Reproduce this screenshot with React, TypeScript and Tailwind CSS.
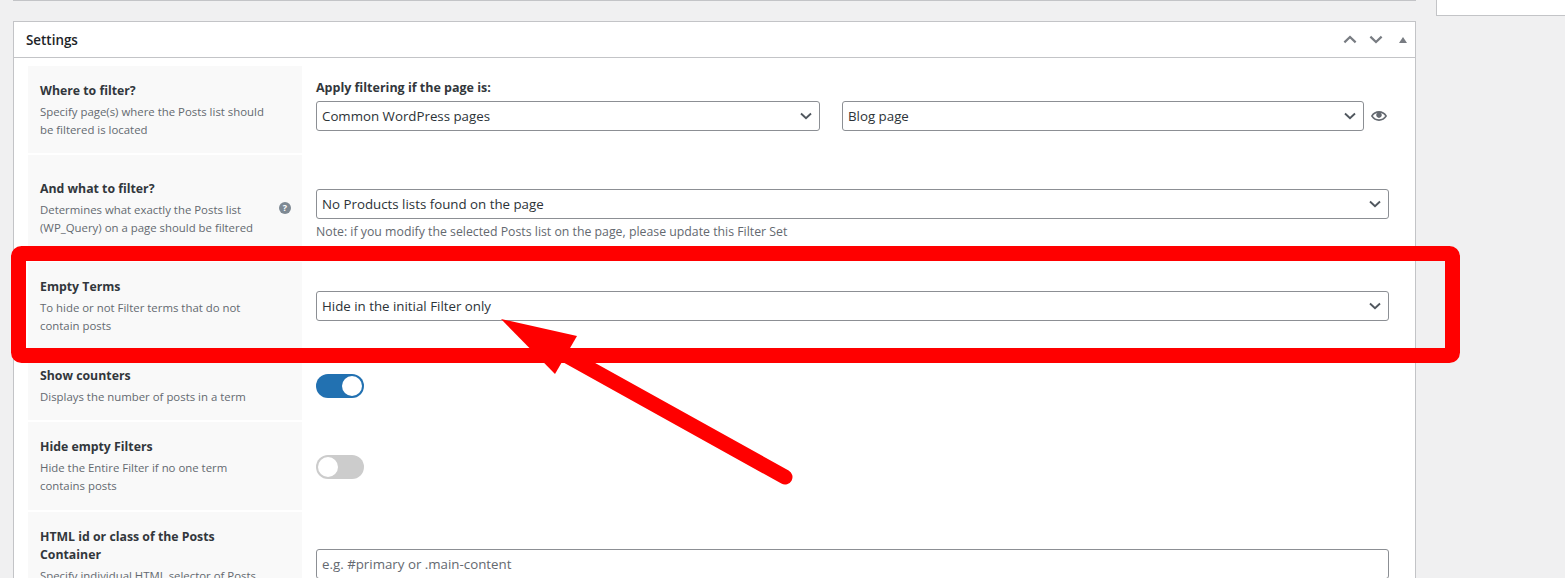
import type { ReactNode } from "react";

const font = { fontFamily: '"Open Sans", sans-serif' };

function Chevron({ className, width = "1.7" }: { className: string; width?: string }) {
  return (
    <svg viewBox="0 0 12 8" className={className} fill="none" stroke="currentColor" strokeWidth={width}>
      <path d="M1 1.5 6 6.2 11 1.5" />
    </svg>
  );
}

function Select({ value, className }: { value: string; className: string }) {
  return (
    <div className={`flex h-[30px] items-center justify-between rounded-[3px] border border-[#8c8f94] bg-white pl-[5px] pr-[7px] text-[13.3px] text-[#2c3338] ${className}`}>
      <span className="pt-[1px]">{value}</span>
      <Chevron className="h-[8px] w-[12px] text-[#50575e]" width="1.9" />
    </div>
  );
}

function Row({
  title,
  desc,
  height,
  top,
  help,
  children,
}: {
  title: string;
  desc: string;
  height: string;
  top: string;
  help?: boolean;
  children: ReactNode;
}) {
  return (
    <div className={`flex ${height}`}>
      <div className="relative flex w-[274px] shrink-0 flex-col justify-center bg-[#f9f9f9] pl-[12px] pr-[28px]">
        <div className="mt-[1px] text-[12.3px] font-bold leading-[18px] text-[#32373c]">{title}</div>
        <div className="mt-[3px] text-[11.4px] leading-[18px] text-[#646970]">{desc}</div>
        {help && (
          <div className="absolute left-[251px] top-[47px] flex h-[12px] w-[12px] items-center justify-center rounded-full bg-[#7e8993] text-[9px] font-bold text-white">
            ?
          </div>
        )}
      </div>
      <div className={`flex-1 pl-[14px] pr-[26px] ${top}`}>{children}</div>
    </div>
  );
}

function Toggle({ on }: { on: boolean }) {
  return (
    <div className={`flex h-[24px] w-[48px] items-center rounded-full px-[2px] ${on ? "justify-end bg-[#2271b1]" : "justify-start bg-[#cccccc]"}`}>
      <div className="h-[20px] w-[20px] rounded-full bg-white" />
    </div>
  );
}

export default function App() {
  return (
    <div className="relative h-[578px] overflow-hidden bg-[#f0f0f1]" style={font}>
      <div className="flex h-[21px] items-start">
        <div className="ml-[13px] h-[1px] w-[1403px] bg-[#c3c4c7]" />
        <div className="ml-[20px] h-[16px] flex-1 border-b border-l border-[#c3c4c7] bg-white" />
      </div>

      {/* Settings box */}
      <div className="ml-[13px] h-[557px] w-[1403px] border-x border-t border-[#c3c4c7] bg-white">
        <div className="flex h-[36px] items-center justify-between border-b border-[#c3c4c7] pl-[12px] pr-[8px]">
          <span className="pt-[1px] text-[13.4px] font-semibold text-[#1d2327]">Settings</span>
          <div className="flex items-center text-[#787c82]">
            <Chevron className="h-[9px] w-[14px] rotate-180" width="2" />
            <Chevron className="ml-[12px] h-[9px] w-[14px]" width="2" />
            <div className="ml-[16px] h-0 w-0 border-x-[4px] border-b-[6px] border-x-transparent border-b-[#787c82]" />
          </div>
        </div>

        <div className="flex flex-col gap-[2px] pl-[14px] pt-[8px]">
          <Row
            title="Where to filter?"
            desc="Specify page(s) where the Posts list should be filtered is located"
            height="h-[87px]"
            top="pt-[13px]"
          >
            <div className="mb-[4px] text-[12.5px] font-bold leading-[18px] text-[#32373c]">Apply filtering if the page is:</div>
            <div className="flex items-center">
              <Select value="Common WordPress pages" className="w-[504px]" />
              <Select value="Blog page" className="ml-[22px] w-[522px]" />
              <svg viewBox="0 0 20 20" className="ml-[7px] h-[16px] w-[16px] text-[#646970]" fill="currentColor">
                <path d="M19.7 9.4C17.7 6 14 3.9 10 3.9S2.3 6 .3 9.4L0 10l.3.6c2 3.4 5.7 5.5 9.7 5.5s7.7-2.1 9.7-5.5l.3-.6-.3-.6zM10 14.1c-3.1 0-6-1.6-7.7-4.1C3.6 8 5.7 6.6 8 6.1c-.9.6-1.5 1.6-1.5 2.8 0 1.9 1.6 3.5 3.5 3.5s3.5-1.6 3.5-3.5c0-1.2-.6-2.2-1.5-2.8 2.3.5 4.4 1.9 5.7 3.9-1.7 2.5-4.6 4.1-7.7 4.1z" />
              </svg>
            </div>
          </Row>
          <Row
            title="And what to filter?"
            desc="Determines what exactly the Posts list (WP_Query) on a page should be filtered"
            height="h-[105px]"
            top="pt-[34px]"
            help
          >
            <Select value="No Products lists found on the page" className="w-[1073px]" />
            <div className="mt-[4px] text-[12.3px] leading-[18px] text-[#646970]">
              Note: if you modify the selected Posts list on the page, please update this Filter Set
            </div>
          </Row>
          <Row
            title="Empty Terms"
            desc="To hide or not Filter terms that do not contain posts"
            height="h-[87px]"
            top="pt-[29px]"
          >
            <Select value="Hide in the initial Filter only" className="w-[1073px]" />
          </Row>
          <Row
            title="Show counters"
            desc="Displays the number of posts in a term"
            height="h-[69px]"
            top="pt-[23px]"
          >
            <Toggle on />
          </Row>
          <Row
            title="Hide empty Filters"
            desc="Hide the Entire Filter if no one term contains posts"
            height="h-[88px]"
            top="pt-[33px]"
          >
            <Toggle on={false} />
          </Row>
          <Row
            title="HTML id or class of the Posts Container"
            desc="Specify individual HTML selector of Posts list"
            height="h-[105px]"
            top="pt-[37px]"
          >
            <div className="flex h-[30px] w-[1073px] items-center rounded-[3px] border border-[#8c8f94] bg-white pl-[5px] pt-[1px] text-[13.3px] text-[#646970]">
              e.g. #primary or .main-content
            </div>
          </Row>
        </div>
      </div>

      {/* Red annotation drawn over the screenshot */}
      <svg className="pointer-events-none absolute left-0 top-0" width="1565" height="578" fill="#ff0000">
        <rect x="18.5" y="253.5" width="1434" height="102" rx="3" fill="none" stroke="#ff0000" strokeWidth="15" />
        <path d="M501 319 577 336 555 374Z" />
        <path d="M560 352 785 477" stroke="#ff0000" strokeWidth="15" strokeLinecap="round" />
      </svg>
    </div>
  );
}
